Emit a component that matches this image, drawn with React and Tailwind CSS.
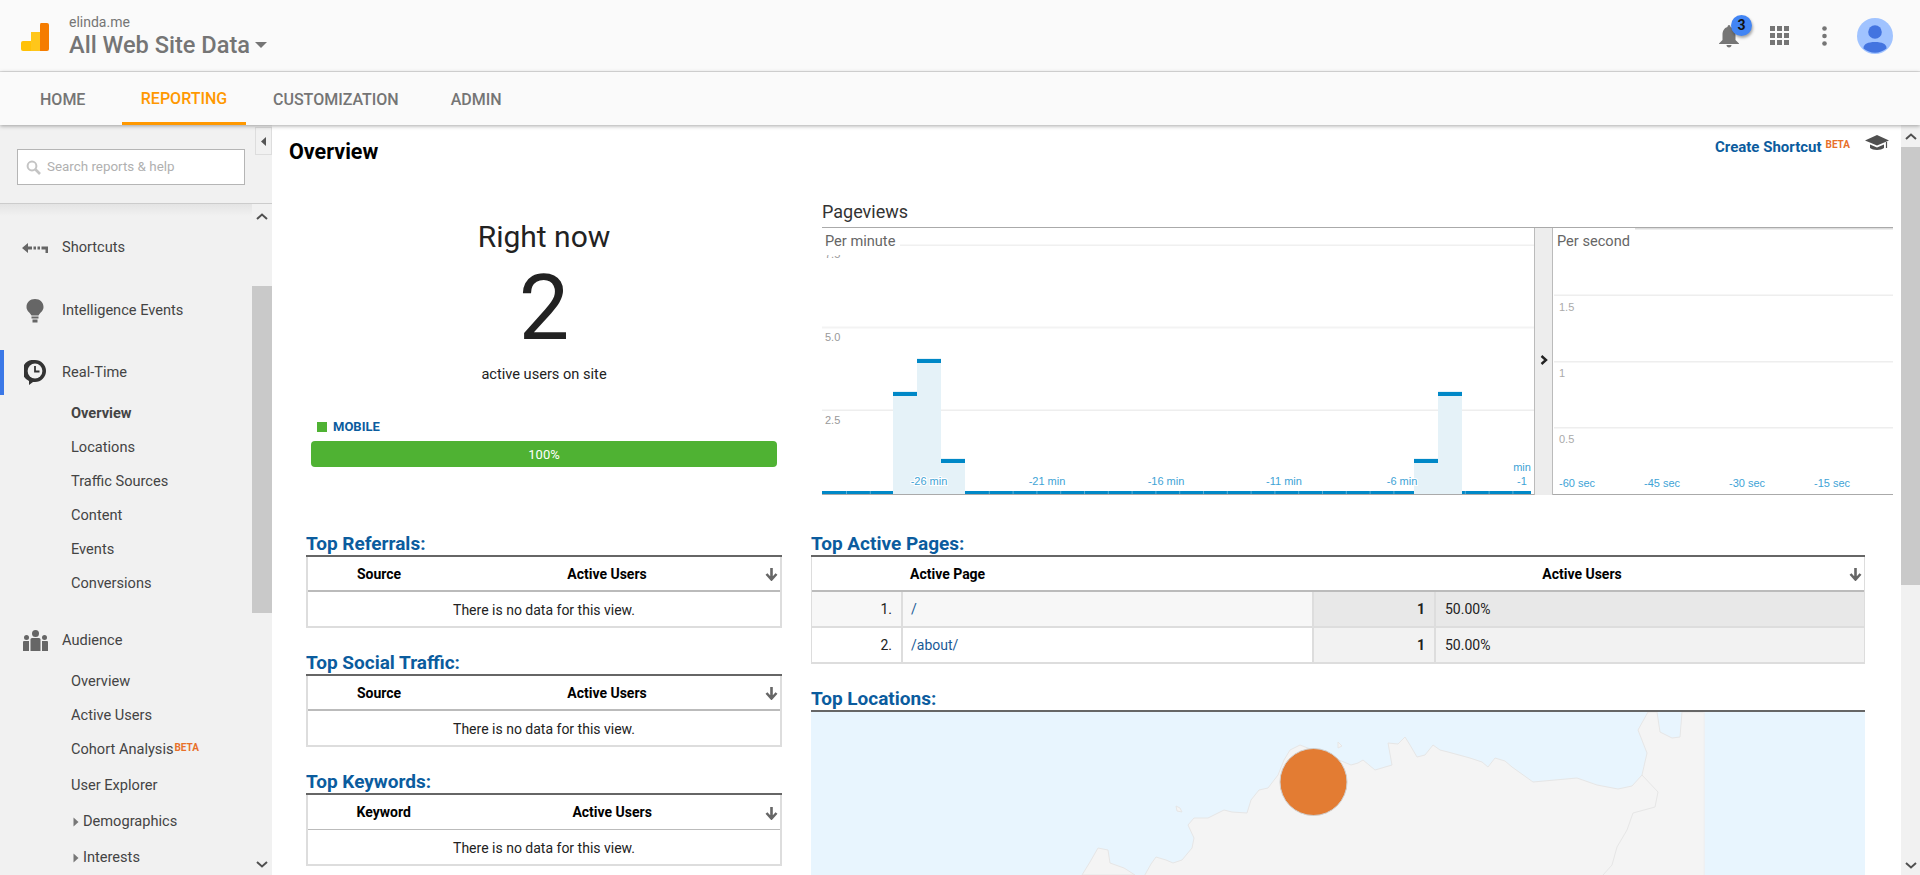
import React from "react";

const Chevron = ({ up }) => (
  <svg width="14" height="9" viewBox="0 0 14 9" className="block">
    <path d={up ? "M2 7 L7 2.5 L12 7" : "M2 2 L7 6.5 L12 2"} fill="none" stroke="#505050" strokeWidth="2" />
  </svg>
);

const SortArrow = () => (
  <svg width="13" height="14" viewBox="0 0 13 14" className="block">
    <path d="M6.5 1 V12 M1.5 7 L6.5 12.5 L11.5 7" fill="none" stroke="#666" strokeWidth="2.6" />
  </svg>
);

const Logo = () => (
  <svg width="28" height="28" viewBox="0 0 28 28" className="block">
    <path d="M2 18 H11 V28 H2 Q0 28 0 26 V20 Q0 18 2 18 Z" fill="#ffc107" />
    <path d="M10 9 H20 V28 H10 Z" fill="#ffc61a" />
    <path d="M20 0 H26 Q28 0 28 2 V26 Q28 28 26 28 H19 V2 Q19 0 20 0 Z" fill="#f57c00" />
  </svg>
);

const Bell = () => (
  <svg width="20" height="24" viewBox="0 0 20 24" className="block">
    <path d="M10 1 C11 1 11.5 2 11.5 3 C15 4 16.5 7 16.5 11 V16 L20 19.5 V20 H0 V19.5 L3.5 16 V11 C3.5 7 5 4 8.5 3 C8.5 2 9 1 10 1 Z" fill="#757575" />
    <path d="M7.5 21 H12.5 C12.5 22.5 11.5 23.5 10 23.5 C8.5 23.5 7.5 22.5 7.5 21 Z" fill="#757575" />
  </svg>
);

const Apps = () => (
  <svg width="19" height="19" viewBox="0 0 19 19" className="block" fill="#757575">
    <rect x="0" y="0" width="5" height="5" /><rect x="7" y="0" width="5" height="5" /><rect x="14" y="0" width="5" height="5" />
    <rect x="0" y="7" width="5" height="5" /><rect x="7" y="7" width="5" height="5" /><rect x="14" y="7" width="5" height="5" />
    <rect x="0" y="14" width="5" height="5" /><rect x="7" y="14" width="5" height="5" /><rect x="14" y="14" width="5" height="5" />
  </svg>
);

const Dots = () => (
  <svg width="5" height="20" viewBox="0 0 5 20" className="block" fill="#757575">
    <circle cx="2.5" cy="2.5" r="2.3" /><circle cx="2.5" cy="10" r="2.3" /><circle cx="2.5" cy="17.5" r="2.3" />
  </svg>
);

const Avatar = () => (
  <svg width="36" height="36" viewBox="0 0 36 36" className="block">
    <circle cx="18" cy="18" r="18" fill="#a0c3ff" />
    <circle cx="18" cy="14" r="6.8" fill="#4374e0" />
    <path d="M6.5 30 C6.5 26 11 24 18 24 C25 24 29.5 26 29.5 30 V30.5 A18 18 0 0 1 6.5 30.5 Z" fill="#4374e0" />
  </svg>
);

const Hat = () => (
  <svg width="24" height="16" viewBox="0 0 24 16" className="block">
    <path d="M0 5.5 L12 0 L24 5.5 L12 10.5 Z" fill="#505050" />
    <path d="M5 9.5 L12 12.5 L19 9.5 V13 C16 15.5 8 15.5 5 13 Z" fill="#505050" />
    <path d="M21.5 7 V13" stroke="#505050" strokeWidth="1.2" />
  </svg>
);

const SearchIcon = () => (
  <svg width="15" height="15" viewBox="0 0 15 15" className="block">
    <circle cx="6" cy="6" r="4.4" fill="none" stroke="#c4c4c4" strokeWidth="2" />
    <path d="M9.5 9.5 L14 14" stroke="#c4c4c4" strokeWidth="2.6" />
  </svg>
);

const ShortcutsIcon = () => (
  <svg width="26" height="12" viewBox="0 0 26 12" className="block" fill="#666">
    <path d="M0 6 L6 1 V4.5 H10 V7.5 H6 V11 Z" />
    <rect x="11.5" y="4.5" width="2.5" height="3" />
    <rect x="15.5" y="4.5" width="2.5" height="3" />
    <path d="M19.5 4.5 H26 V11 H23.5 V7.5 H19.5 Z" />
  </svg>
);

const BulbIcon = () => (
  <svg width="18" height="24" viewBox="0 0 18 24" className="block" fill="#666">
    <path d="M9 0 C14 0 17.5 3.5 17.5 8 C17.5 12 14 13.5 12.5 16.5 H5.5 C4 13.5 0.5 12 0.5 8 C0.5 3.5 4 0 9 0 Z" />
    <rect x="5.5" y="17.5" width="7" height="2" />
    <rect x="6.5" y="20.5" width="5" height="3" />
  </svg>
);

const RealTimeIcon = () => (
  <svg width="22" height="25" viewBox="0 0 22 25" className="block">
    <path d="M11 0 A11 11 0 0 1 11 22 H9 L5 25 V21 A11 11 0 0 1 11 0 Z" fill="#333" />
    <circle cx="11" cy="11" r="7.4" fill="#f1f1f1" />
    <path d="M11 6 V11.5 H15.5" fill="none" stroke="#333" strokeWidth="1.8" />
  </svg>
);

const AudienceIcon = () => (
  <svg width="25" height="21" viewBox="0 0 25 21" className="block" fill="#666">
    <circle cx="12.5" cy="3.5" r="3.5" />
    <circle cx="3.5" cy="7.5" r="2.5" />
    <circle cx="21.5" cy="7.5" r="2.5" />
    <path d="M7.5 9.5 Q7.5 8 9 8 H16 Q17.5 8 17.5 9.5 V21 H7.5 Z" />
    <path d="M1 11 H6 V21 H0 V12 Q0 11 1 11 Z" />
    <path d="M19 11 H24 Q25 11 25 12 V21 H19 Z" />
  </svg>
);

const Tri = () => (
  <svg width="6" height="10" viewBox="0 0 6 10" className="block">
    <path d="M0.5 0.5 L5.5 5 L0.5 9.5 Z" fill="#777" />
  </svg>
);

const Beta = ({ cls }) => <span className={"font-bold text-[#e8702a] " + cls}>BETA</span>;

const Section = ({ children }) => (
  <div className="flex h-[45px] items-center text-[14.6px] text-[#444]">{children}</div>
);

const SubItem = ({ children, bold }) => (
  <div className={"flex h-[34px] items-center pl-[71px] text-[14.6px] text-[#444] " + (bold ? "font-bold text-[#333]" : "")}>{children}</div>
);

const Sidebar = () => (
  <aside className="relative flex w-[272px] shrink-0 flex-col bg-[#f1f1f1]">
    <div className="flex h-[79px] shrink-0 items-start border-b border-[#ccc] pl-[17px] pt-[24px]">
      <div className="flex h-[36px] w-[228px] items-center gap-[6px] border border-[#b5b5b5] bg-white pl-[8px] text-[13.4px] text-[#b0b0b0]">
        <SearchIcon />
        <span>Search reports &amp; help</span>
      </div>
    </div>
    <button className="absolute left-[255px] top-[2px] flex h-[28px] w-[17px] items-center justify-center border border-[#ddd] bg-[#f1f1f1]">
      <svg width="5" height="9" viewBox="0 0 5 9"><path d="M5 0 V9 L0 4.5 Z" fill="#555" /></svg>
    </button>
    <div className="flex min-h-0 flex-1">
      <nav className="w-[252px] shrink-0 bg-gradient-to-b from-[#e4e4e4] from-0% to-[#f1f1f1] to-[12px] pt-[21px]">
        <Section>
          <span className="flex w-[62px] justify-end pr-[14px]"><ShortcutsIcon /></span>
          <span>Shortcuts</span>
        </Section>
        <div className="h-[18px]" />
        <Section>
          <span className="flex w-[62px] justify-end pr-[18px]"><BulbIcon /></span>
          <span>Intelligence Events</span>
        </Section>
        <div className="h-[17px]" />
        <div className="relative">
          <div className="absolute left-0 top-0 h-[45px] w-[4px] bg-[#3b78e7]" />
          <Section>
            <span className="flex w-[62px] justify-end pr-[16px]"><RealTimeIcon /></span>
            <span>Real-Time</span>
          </Section>
        </div>
        <div className="h-[2px]" />
        <SubItem bold>Overview</SubItem>
        <SubItem>Locations</SubItem>
        <SubItem>Traffic Sources</SubItem>
        <SubItem>Content</SubItem>
        <SubItem>Events</SubItem>
        <SubItem>Conversions</SubItem>
        <div className="h-[17px]" />
        <Section>
          <span className="flex w-[62px] justify-end pr-[14px]"><AudienceIcon /></span>
          <span>Audience</span>
        </Section>
        <div className="h-[2px]" />
        <SubItem>Overview</SubItem>
        <SubItem>Active Users</SubItem>
        <SubItem>
          Cohort Analysis<Beta cls="ml-[1px] -mt-[5px] text-[10px]" />
        </SubItem>
        <div className="h-[2px]" />
        <SubItem>User Explorer</SubItem>
        <div className="h-[2px]" />
        <div className="flex h-[34px] items-center gap-[4px] pl-[73px] text-[14.6px] text-[#444]"><Tri />Demographics</div>
        <div className="h-[2px]" />
        <div className="flex h-[34px] items-center gap-[4px] pl-[73px] text-[14.6px] text-[#444]"><Tri />Interests</div>
      </nav>
      <div className="flex w-[20px] shrink-0 flex-col items-stretch bg-[#f1f1f1]">
        <div className="flex h-[24px] items-center justify-center"><Chevron up /></div>
        <div className="h-[58px]" />
        <div className="h-[327px] w-[20px] bg-[#c9c9c9]" />
        <div className="flex-1" />
        <div className="flex h-[22px] items-center justify-center"><Chevron /></div>
      </div>
    </div>
  </aside>
);

const blueTicks = [];
for (let x = 846; x < 1531; x += 23.8) blueTicks.push(x);

const MinuteChart = () => (
  <svg width="712" height="272" viewBox="822 228 712 272" className="block shrink-0" fontFamily="'Liberation Sans', sans-serif">
    <rect x="900" y="244.5" width="634" height="1.5" fill="#f0f0f0" />
    <rect x="822" y="326.5" width="712" height="2" fill="#f3f3f3" />
    <rect x="822" y="409.5" width="712" height="1.5" fill="#eeeeee" />
    <text x="825" y="258" fontSize="11" fill="#999">7.5</text>
    <rect x="822" y="246" width="60" height="9" fill="#fff" />
    <text x="825" y="341" fontSize="11" fill="#999">5.0</text>
    <text x="825" y="424" fontSize="11" fill="#999">2.5</text>
    <text x="825" y="246" fontSize="14.6" fill="#666" fontFamily="Roboto, sans-serif">Per minute</text>

    <rect x="893" y="391" width="24" height="103" fill="#e5f2f8" />
    <rect x="917" y="358" width="24" height="136" fill="#e5f2f8" />
    <rect x="941" y="458" width="24" height="36" fill="#e5f2f8" />
    <rect x="1414" y="458" width="24" height="36" fill="#e5f2f8" />
    <rect x="1438" y="391" width="24" height="103" fill="#e5f2f8" />

    <rect x="893" y="392" width="24" height="4" fill="#0088c7" />
    <rect x="917" y="359" width="24" height="4" fill="#0088c7" />
    <rect x="941" y="459" width="24" height="4" fill="#0088c7" />
    <rect x="1414" y="459" width="24" height="4" fill="#0088c7" />
    <rect x="1438" y="392" width="24" height="4" fill="#0088c7" />

    <rect x="822" y="491" width="71" height="3" fill="#0088c7" />
    <rect x="965" y="491" width="449" height="3" fill="#0088c7" />
    <rect x="1462" y="491" width="69" height="3" fill="#0088c7" />
    {blueTicks.filter((x) => !(x > 890 && x < 968) && !(x > 1412 && x < 1464)).map((x) => (
      <rect key={x} x={x} y="491" width="1" height="3" fill="#55aed8" />
    ))}
    <rect x="822" y="494" width="712" height="1" fill="#aaa" />

    <g fontSize="11" fill="#3ea3d6" textAnchor="middle" stroke="#fff" strokeWidth="2" paintOrder="stroke">
      <text x="929" y="485">-26 min</text>
      <text x="1047" y="485">-21 min</text>
      <text x="1166" y="485">-16 min</text>
      <text x="1284" y="485">-11 min</text>
      <text x="1402" y="485">-6 min</text>
      <text x="1522" y="471">min</text>
      <text x="1522" y="485">-1</text>
    </g>
  </svg>
);

const SecondChart = () => (
  <svg width="340" height="272" viewBox="1553 228 340 272" className="block shrink-0" fontFamily="'Liberation Sans', sans-serif">
    <rect x="1635" y="228" width="258" height="1.5" fill="#ddd" />
    <rect x="1554" y="294.5" width="339" height="1.5" fill="#eeeeee" />
    <rect x="1554" y="361" width="339" height="1.5" fill="#eeeeee" />
    <rect x="1554" y="427" width="339" height="1.5" fill="#eeeeee" />
    <text x="1557" y="246" fontSize="14.6" fill="#666" fontFamily="Roboto, sans-serif">Per second</text>
    <g fontSize="11" fill="#aaa">
      <text x="1559" y="311">1.5</text>
      <text x="1559" y="377">1</text>
      <text x="1559" y="443">0.5</text>
    </g>
    <g fontSize="11" fill="#3ea3d6">
      <text x="1559" y="487">-60 sec</text>
      <text x="1644" y="487">-45 sec</text>
      <text x="1729" y="487">-30 sec</text>
      <text x="1814" y="487">-15 sec</text>
    </g>
    <rect x="1553" y="494" width="340" height="1" fill="#aaa" />
  </svg>
);

const Pageviews = () => (
  <div className="w-[1071px] shrink-0">
    <div className="h-[33px] border-b border-[#aaa] pt-[5px] text-[18px] leading-[24px] text-[#333]">Pageviews</div>
    <div className="flex">
      <MinuteChart />
      <div className="flex h-[267px] w-[19px] shrink-0 items-center justify-center border-x border-[#bbb] bg-[#ededed]">
        <svg width="8" height="10" viewBox="0 0 8 10" className="-mt-[3px]"><path d="M1.5 1 L6 5 L1.5 9" fill="none" stroke="#222" strokeWidth="2.4" /></svg>
      </div>
      <SecondChart />
    </div>
  </div>
);

const Heading = ({ children }) => (
  <div className="h-[26px] border-b-2 border-[#666] text-[19px] font-bold leading-[25px] text-[#0b5c9e]">{children}</div>
);

const EmptyTable = ({ title, first, keyword }) => (
  <div>
    <Heading>{title}</Heading>
    <div className="border-x-2 border-b-2 border-[#ddd] text-[14px]">
      <div className={"flex h-[35px] items-center pt-[1px] text-black font-bold " + (keyword ? "border-b border-[#bbb]" : "border-b-2 border-[#bbb]")}>
        <div className={"text-center " + (keyword ? "w-[152px]" : "w-[142px]")}>{first}</div>
        <div className={"text-center " + (keyword ? "w-[307px]" : "w-[314px]")}>Active Users</div>
        <div className="flex flex-1 justify-end pr-[2px]"><SortArrow /></div>
      </div>
      <div className="flex h-[34px] items-center justify-center pt-[2px] text-[#222]">There is no data for this view.</div>
    </div>
  </div>
);

const Row = ({ n, path, white }) => (
  <div className="flex h-[36px] border-b-2 border-[#ddd] text-[14px]">
    <div className={"w-[91px] border-r-2 border-[#ddd] pr-[9px] text-right leading-[35px] text-[#222] " + (white ? "bg-white" : "bg-[#f7f7f7]")}>{n}.</div>
    <div className={"w-[411px] border-r-2 border-[#ddd] pl-[8px] leading-[35px] text-[#1a5a96] " + (white ? "bg-white" : "bg-[#f7f7f7]")}>{path}</div>
    <div className={"w-[122px] border-r-2 border-[#ddd] pr-[9px] text-right font-bold leading-[35px] text-[#222] " + (white ? "bg-[#f2f2f2]" : "bg-[#e8e8e8]")}>1</div>
    <div className={"flex-1 pl-[9px] leading-[35px] text-[#222] " + (white ? "bg-[#f2f2f2]" : "bg-[#e8e8e8]")}>50.00%</div>
  </div>
);

const MapView = () => (
  <svg width="1054" height="163" viewBox="811 712 1054 163" className="block">
    <rect x="811" y="712" width="1054" height="163" fill="#e8f5fe" />
    <path
      d="M1082 875 L1090 862 L1098 848 L1108 850 L1110 863 L1124 868 L1135 875 Z"
      fill="#f4f4f4" stroke="#e6e6e6" strokeWidth="1"
    />
    <path
      d="M1142 880 L1151 864 L1156 857 L1166 860 L1173 863 L1182 860 L1192 848 L1194 838 L1188 825 L1194 818 L1208 818 L1224 810 L1232 812 L1247 813 L1251 800 L1259 790 L1268 788 L1278 775 L1284 760 L1290 750 L1300 745 L1339 760 L1351 765 L1358 763 L1363 760 L1375 770 L1392 765 L1388 743 L1398 744 L1405 737 L1410 745 L1417 757 L1425 755 L1433 745 L1440 750 L1448 752 L1470 758 L1482 762 L1488 767 L1495 758 L1505 761 L1512 767 L1533 782 L1577 778 L1597 785 L1618 789 L1632 786 L1642 775 L1647 753 L1638 730 L1648 712 L1657 712 L1660 732 L1672 738 L1680 737 L1682 712 L1704 712 L1704 880 Z"
      fill="#f4f4f4" stroke="#e6e6e6" strokeWidth="1"
    />
    <path d="M1684 713 H1703.5 V875 H1690 V714 Z" fill="#f4f4f4" />
    <path d="M1704 711 V876" stroke="#f4f4f4" strokeWidth="1" />
    <path d="M1176 806 L1180 808 L1182 812 L1177 811 Z" fill="#f4f4f4" stroke="#e6e6e6" />
    <path d="M1338 742 L1342 746 L1338 748 Z" fill="#f4f4f4" stroke="#e6e6e6" />
    <path
      d="M1642 775 L1658 792 L1655 807 L1633 813 L1627 830 L1617 847 L1612 865 L1603 875"
      fill="none" stroke="#e6e6e6" strokeWidth="1"
    />
    <circle cx="1313.5" cy="782" r="33.5" fill="#e37c33" stroke="#cfcfcf" strokeWidth="1" />
  </svg>
);

const Content = () => (
  <main className="min-w-0 flex-1 overflow-hidden bg-white">
    <div className="flex h-[70px] items-start justify-between pl-[17px] pr-[12px] pt-[14px]">
      <h1 className="text-[21.5px] font-bold leading-[26px] text-black">Overview</h1>
      <div className="flex items-start pt-[1px]">
        <span className="text-[15px] font-bold leading-[15px] text-[#0b5c9e]">Create Shortcut</span>
        <Beta cls="ml-[4px] text-[10px] leading-[12px] -mt-[1px]" />
        <span className="-mt-[5px] ml-[15px]"><Hat /></span>
      </div>
    </div>
    <div className="flex h-[336px]">
      <div className="ml-[39px] flex w-[466px] shrink-0 flex-col">
        <div className="mt-[24px] h-[36px] text-center text-[30px] font-normal leading-[36px] text-[#222]">Right now</div>
        <div className="mt-[2px] h-[104px] text-center text-[90px] font-normal leading-[104px] text-[#222]">2</div>
        <div className="mt-[3px] h-[20px] text-center text-[14.6px] leading-[20px] text-[#222]">active users on site</div>
        <div className="mt-[35px] flex h-[16px] items-center gap-[6px] pl-[6px]">
          <span className="h-[10px] w-[10px] bg-[#4fb233]" />
          <span className="text-[13px] font-bold text-[#0b5c9e]">MOBILE</span>
        </div>
        <div className="mt-[6px] flex h-[26px] items-center justify-center rounded-[4px] bg-[#4fb233] pt-[1px] text-[13px] text-white">100%</div>
      </div>
      <div className="ml-[45px]"><Pageviews /></div>
    </div>
    <div className="flex gap-[29px] pl-[34px]">
      <div className="flex w-[476px] shrink-0 flex-col gap-[22px]">
        <EmptyTable title="Top Referrals:" first="Source" />
        <EmptyTable title="Top Social Traffic:" first="Source" />
        <EmptyTable title="Top Keywords:" first="Keyword" keyword />
      </div>
      <div className="w-[1054px] shrink-0">
        <Heading>Top Active Pages:</Heading>
        <div className="border-x border-[#ddd]">
          <div className="flex h-[35px] items-center border-b-2 border-[#bbb] pt-[1px] text-[14px] font-bold text-black">
            <div className="w-[98px] shrink-0" />
            <div className="w-[524px] shrink-0">Active Page</div>
            <div className="w-[296px] shrink-0 text-center">Active Users</div>
            <div className="flex flex-1 justify-end pr-[2px]"><SortArrow /></div>
          </div>
          <Row n="1" path="/" />
          <Row n="2" path="/about/" white />
        </div>
        <div className="mt-[22px]"><Heading>Top Locations:</Heading></div>
        <MapView />
      </div>
    </div>
  </main>
);

const MainScrollbar = () => (
  <div className="flex w-[19px] shrink-0 flex-col bg-[#f1f1f1]">
    <div className="flex h-[22px] items-center justify-center"><Chevron up /></div>
    <div className="h-[438px] bg-[#c9c9c9]" />
    <div className="flex-1" />
    <div className="flex h-[20px] items-center justify-center"><Chevron /></div>
  </div>
);

export default function App() {
  return (
    <div className="flex h-[875px] w-[1920px] flex-col overflow-hidden bg-white font-['Roboto',sans-serif]">
      <header className="flex h-[72px] shrink-0 items-center border-b border-[#e0e0e0] bg-[#fafafa] pl-[21px] pr-[27px]">
        <div className="mt-[3px]"><Logo /></div>
        <div className="ml-[20px] mt-[3px]">
          <div className="text-[14px] leading-[16px] text-[#757575]">elinda.me</div>
          <div className="flex items-center">
            <span className="text-[23.6px] font-medium leading-[30px] text-[#757575]">All Web Site Data</span>
            <svg width="12" height="6" viewBox="0 0 12 6" className="ml-[5px] -mt-[1px]"><path d="M0 0 H12 L6 6 Z" fill="#757575" /></svg>
          </div>
        </div>
        <div className="flex-1" />
        <div className="relative">
          <Bell />
          <div className="absolute -right-[13px] -top-[9px] flex h-[21px] w-[21px] items-center justify-center rounded-full bg-[#4285f4] text-[14px] font-bold text-[#111] shadow-[1px_2px_3px_rgba(0,0,0,0.35)]">3</div>
        </div>
        <div className="ml-[31px]"><Apps /></div>
        <div className="ml-[33px]"><Dots /></div>
        <div className="ml-[30px]"><Avatar /></div>
      </header>
      <div className="relative z-10 flex h-[53px] shrink-0 items-stretch bg-[#fafafa] pl-[40px] text-[16px] font-medium uppercase text-[#757575] shadow-[0_1px_4px_rgba(0,0,0,0.35)]">
        <a className="flex w-[82px] items-center pt-[3px]">Home</a>
        <a className="flex w-[124px] items-center justify-center border-b-[3px] border-[#ff9800] pt-[3px] text-[#ff9800]">Reporting</a>
        <a className="ml-[27px] flex items-center pt-[3px]">Customization</a>
        <a className="ml-[52px] flex items-center pt-[3px]">Admin</a>
      </div>
      <div className="flex min-h-0 flex-1">
        <Sidebar />
        <Content />
        <MainScrollbar />
      </div>
    </div>
  );
}
